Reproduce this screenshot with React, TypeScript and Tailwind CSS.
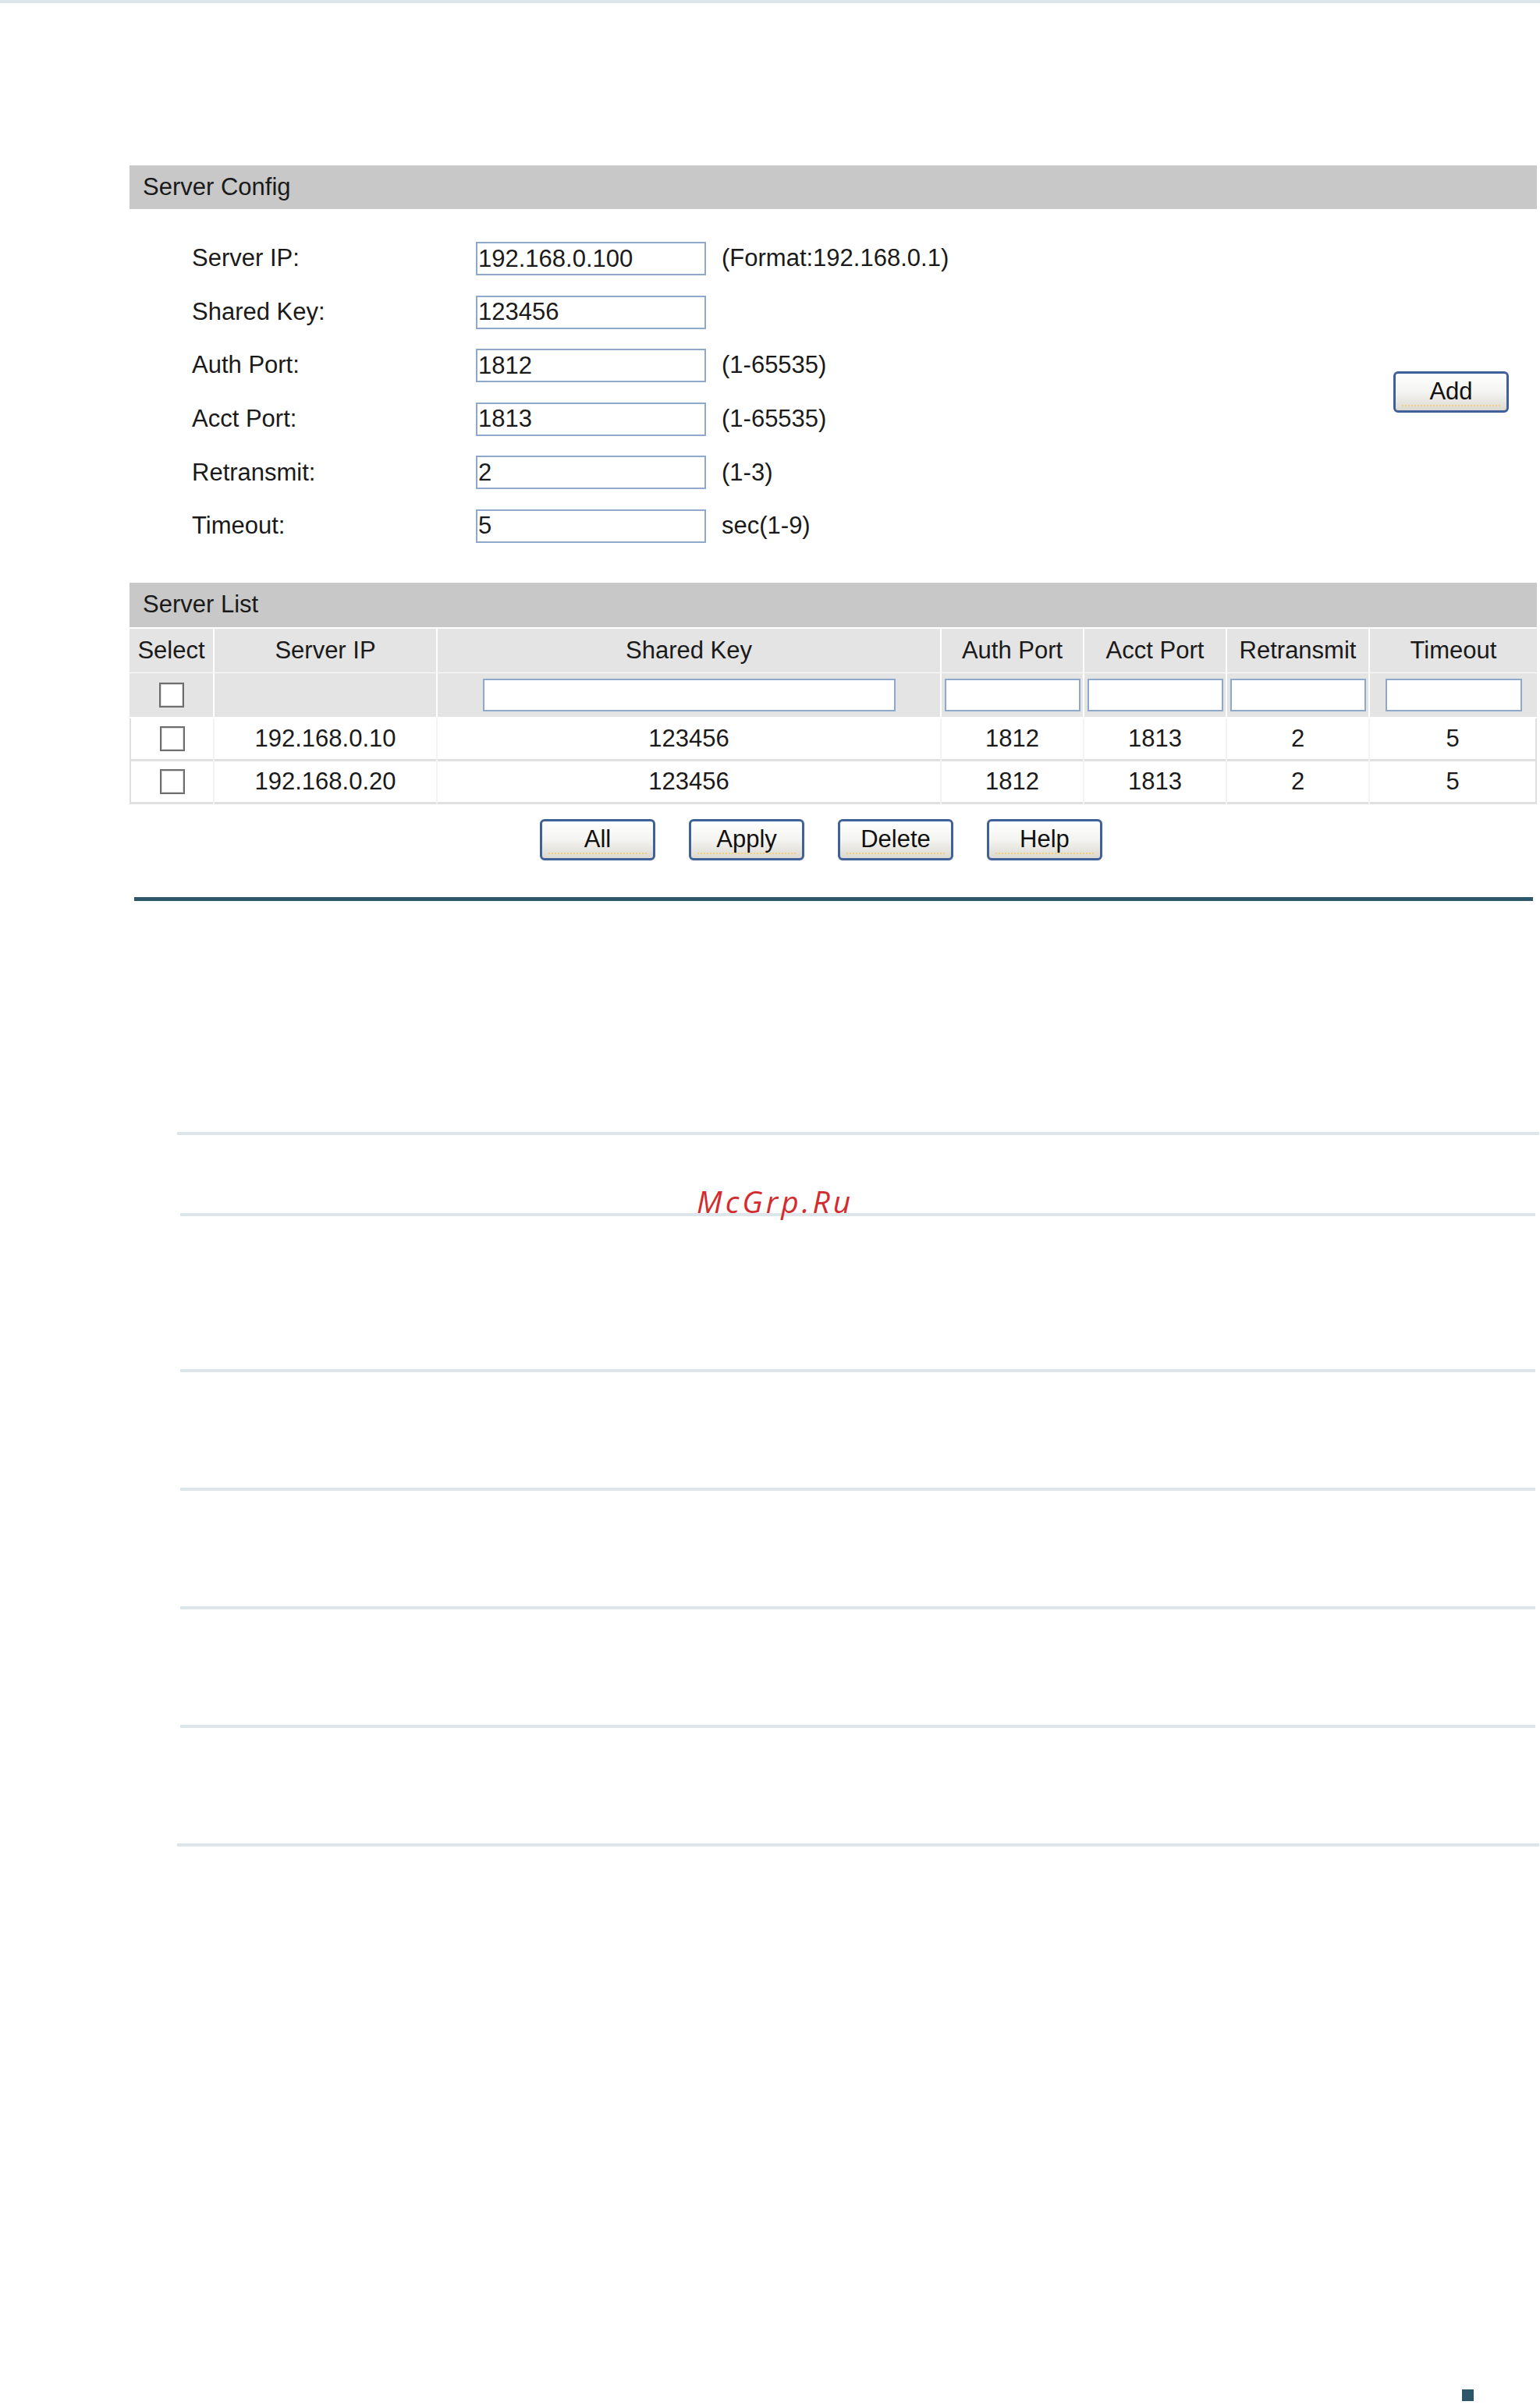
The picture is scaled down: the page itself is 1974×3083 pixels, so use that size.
import type { ReactNode } from 'react';

type ServerRow = {
  ip: string;
  key: string;
  authPort: number;
  acctPort: number;
  retransmit: number;
  timeout: number;
};

const servers: ServerRow[] = [
  { ip: '192.168.0.10', key: '123456', authPort: 1812, acctPort: 1813, retransmit: 2, timeout: 5 },
  { ip: '192.168.0.20', key: '123456', authPort: 1812, acctPort: 1813, retransmit: 2, timeout: 5 },
];

const configFields = [
  { label: 'Server IP:', value: '192.168.0.100', hint: '(Format:192.168.0.1)' },
  { label: 'Shared Key:', value: '123456', hint: '' },
  { label: 'Auth Port:', value: '1812', hint: '(1-65535)' },
  { label: 'Acct Port:', value: '1813', hint: '(1-65535)' },
  { label: 'Retransmit:', value: '2', hint: '(1-3)' },
  { label: 'Timeout:', value: '5', hint: 'sec(1-9)' },
];

const columns = ['Select', 'Server IP', 'Shared Key', 'Auth Port', 'Acct Port', 'Retransmit', 'Timeout'];

const gridCols = 'grid grid-cols-[107px_284px_644px_181px_181px_181px_214px] gap-x-[2px]';

function TextBox({ value, className }: { value?: string; className: string }) {
  return (
    <input
      type="text"
      defaultValue={value}
      className={`h-[42px] border-2 border-[#8ea9cb] bg-white px-[1px] text-[31px] leading-none text-[#1a1a1a] outline-none ${className}`}
    />
  );
}

function CheckBox() {
  return (
    <input
      type="checkbox"
      className="h-[32px] w-[32px] appearance-none border-2 border-[#6e6e6e] bg-white shadow-[inset_0_0_0_1px_#d8d8d8]"
    />
  );
}

function XpButton({ children }: { children: ReactNode }) {
  return (
    <button
      type="button"
      className="relative flex h-[53px] w-[148px] items-center justify-center rounded-[6px] border-[3px] border-[#3f6198] bg-linear-to-b from-white via-[#f4f4f1] to-[#dcd9d0] text-[31px] leading-none text-[#111]"
    >
      <span className="absolute inset-x-[8px] bottom-[5px] border-b-2 border-dotted border-[#efd07c]" />
      <span className="relative -mt-[2px]">{children}</span>
    </button>
  );
}

function SectionBar({ title, className = '' }: { title: string; className?: string }) {
  return (
    <div className={`flex items-center bg-[#c8c8c8] pl-[17px] text-[31px] text-[#1a1a1a] ${className}`}>{title}</div>
  );
}

function HeadCell({ children }: { children?: ReactNode }) {
  return <div className="flex items-center justify-center bg-[#e4e4e4]">{children}</div>;
}

export default function App() {
  return (
    <div className="relative h-[3083px] w-[1974px] bg-white font-['Liberation_Sans',Arial,sans-serif] text-[#1a1a1a]">
      <div className="h-[4px] bg-[#dde7eb]" />

      <div className="pl-[166px] pr-[4px]">
        {/* server config */}
        <SectionBar title="Server Config" className="mt-[208px] h-[56px]" />
        <div className="mt-[42px] flex items-center justify-between pl-[80px] pr-[36px]">
          <div className="flex flex-col gap-[25.6px]">
            {configFields.map((field) => (
              <div key={field.label} className="flex h-[43px] items-center text-[31px]">
                <span className="w-[364px]">{field.label}</span>
                <TextBox value={field.value} className="h-[43px] w-[295px]" />
                {field.hint && <span className="ml-[20px]">{field.hint}</span>}
              </div>
            ))}
          </div>
          <XpButton>Add</XpButton>
        </div>

        {/* server list */}
        <SectionBar title="Server List" className="mt-[51px] h-[57px]" />
        <div className={`${gridCols} mt-[2px] h-[56px] text-[31px]`}>
          {columns.map((col) => (
            <HeadCell key={col}>{col}</HeadCell>
          ))}
        </div>
        <div className={`${gridCols} mt-[1px] h-[56px]`}>
          <HeadCell>
            <CheckBox />
          </HeadCell>
          <HeadCell />
          <HeadCell>
            <TextBox className="w-[529px]" />
          </HeadCell>
          <HeadCell>
            <TextBox className="w-[174px]" />
          </HeadCell>
          <HeadCell>
            <TextBox className="w-[174px]" />
          </HeadCell>
          <HeadCell>
            <TextBox className="w-[174px]" />
          </HeadCell>
          <HeadCell>
            <TextBox className="w-[175px]" />
          </HeadCell>
        </div>
        <div className="mt-[2px]">
          {servers.map((s) => (
            <div key={s.ip} className={`${gridCols} h-[55px] bg-[#f3f3f3] text-[31px]`}>
              <div className="flex items-center justify-center border-b-[3px] border-l-2 border-[#e0e0e0] bg-white">
                <CheckBox />
              </div>
              <div className="flex items-center justify-center border-b-[3px] border-[#e0e0e0] bg-white">{s.ip}</div>
              <div className="flex items-center justify-center border-b-[3px] border-[#e0e0e0] bg-white">{s.key}</div>
              <div className="flex items-center justify-center border-b-[3px] border-[#e0e0e0] bg-white">{s.authPort}</div>
              <div className="flex items-center justify-center border-b-[3px] border-[#e0e0e0] bg-white">{s.acctPort}</div>
              <div className="flex items-center justify-center border-b-[3px] border-[#e0e0e0] bg-white">{s.retransmit}</div>
              <div className="flex items-center justify-center border-b-[3px] border-r-2 border-[#e0e0e0] bg-white">
                {s.timeout}
              </div>
            </div>
          ))}
        </div>

        <div className="mt-[19px] flex gap-[43px] pl-[526px]">
          <XpButton>All</XpButton>
          <XpButton>Apply</XpButton>
          <XpButton>Delete</XpButton>
          <XpButton>Help</XpButton>
        </div>

        <div className="ml-[6px] mt-[47px] h-[5px] w-[1793px] bg-[#2d5668]" />
      </div>

      {/* ruled rows below */}
      <div className="ml-[227px] mt-[296px] h-[4px] w-[1746px] bg-[#dde7eb]" />
      <div className="h-[100px]" />
      <div className="ml-[231px] h-[4px] w-[1737px] bg-[#dde7eb]" />
      <div className="ml-[231px] mt-[196px] h-[4px] w-[1737px] bg-[#dde7eb]" />
      <div className="ml-[231px] mt-[148px] h-[4px] w-[1737px] bg-[#dde7eb]" />
      <div className="ml-[231px] mt-[148px] h-[4px] w-[1737px] bg-[#dde7eb]" />
      <div className="ml-[231px] mt-[148px] h-[4px] w-[1737px] bg-[#dde7eb]" />
      <div className="ml-[227px] mt-[148px] h-[4px] w-[1746px] bg-[#dde7eb]" />

      <div className="ml-[1874px] mt-[696px] h-[15px] w-[15px] bg-[#2d5668]" />

      <span className="absolute left-[893px] top-[1520px] font-['Open_Sans',sans-serif] text-[39px] italic leading-none tracking-[4px] text-[#d42b2e]">
        McGrp.Ru
      </span>
    </div>
  );
}
